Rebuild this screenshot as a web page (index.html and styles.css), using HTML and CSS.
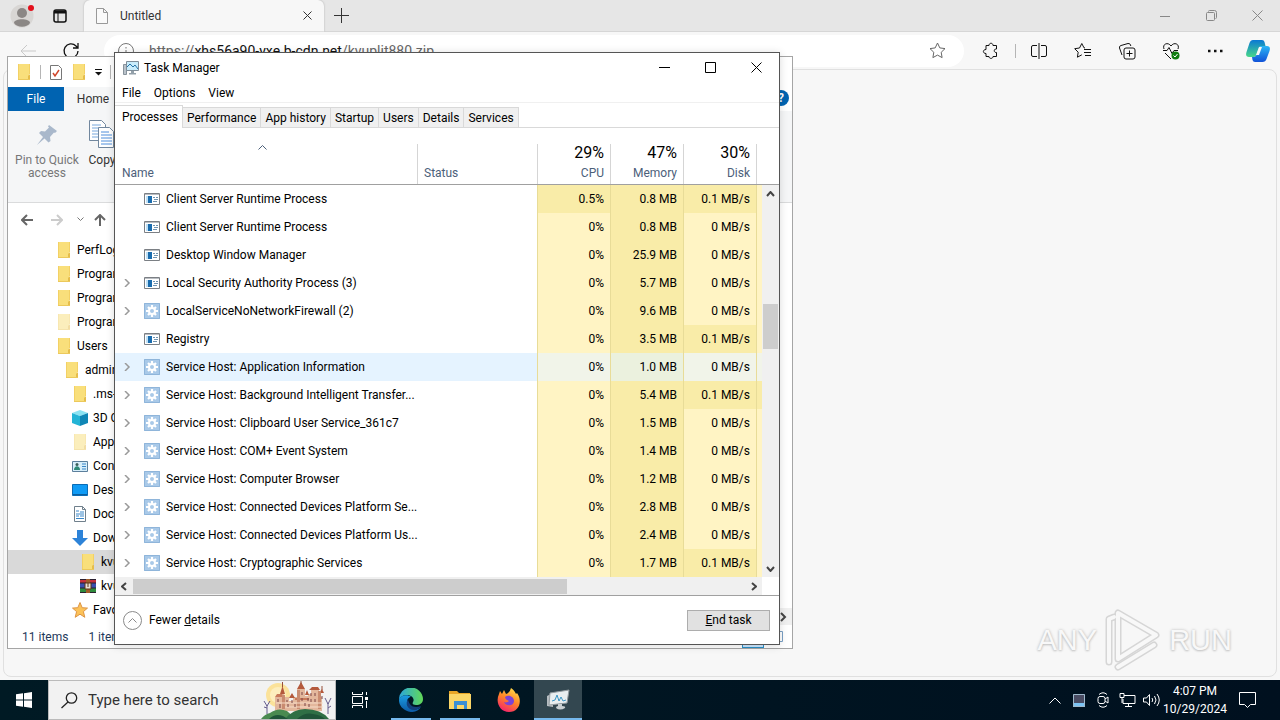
FILE: index.html
```html
<!DOCTYPE html>
<html lang="en">

<head>
    <meta charset="UTF-8">
    <meta name="viewport" content="width=device-width, initial-scale=1.0">
    <title>Desktop</title>
    <link rel="stylesheet" href="styles.css">
</head>

<body>
    <!-- shared icons -->
    <svg class="sprite" aria-hidden="true">
        <symbol id="i-folder" viewBox="0 0 16 16">
            <path d="M2 0h11v11l1 1v4H2z" fill="#f9df7b"/>
            <path d="M2 0h1v16H2zM13 0h1v10h-1z" fill="#f3d165"/>
            <path d="M12 12l2-2v6h-2z" fill="#e6bd4b"/>
            <path d="M2 15h12v1H2z" fill="#ecc95c"/>
        </symbol>
        <symbol id="i-cube" viewBox="0 0 16 16">
            <path d="M8 0l8 3-8 3-8-3z" fill="#8be3f2"/>
            <path d="M0 3l8 3v10l-8-3z" fill="#23b4d6"/>
            <path d="M16 3L8 6v10l8-3z" fill="#0f86b5"/>
        </symbol>
        <symbol id="i-contact" viewBox="0 0 16 16">
            <path d="M.5 3.500h15v10H.5z" fill="#d7eefa" stroke="#5b7f9c"/>
            <circle cx="5" cy="6.500" r="1.500" fill="#3b5f5a"/>
            <path d="M2 12c0-5 6-5 6 0z" fill="#2f8a78"/>
            <path d="M10 6h4M10 8.500h4M10 11h4" stroke="#3a87c8"/>
        </symbol>
        <symbol id="i-desktop" viewBox="0 0 16 16">
            <path d="M.5 2.500h15v11H.5z" fill="#109bf5" stroke="#0b6cb5"/>
            <path d="M1 12h14v1H1z" fill="#0a5f9f"/>
        </symbol>
        <symbol id="i-doc" viewBox="0 0 16 16">
            <path d="M2.500.5h8l3 3v12h-11z" fill="#fff" stroke="#70808c"/>
            <path d="M10.500.5v3h3" fill="none" stroke="#70808c"/>
            <path d="M4 5h3M8 6h4M4 8h8M4 10h3M8 10h4M4 12.500h8" stroke="#3a87c8"/>
        </symbol>
        <symbol id="i-down" viewBox="0 0 16 16">
            <path d="M5 0h6v8h5l-8 8-8-8h5z" fill="#2d83d8"/>
        </symbol>
        <symbol id="i-rar" viewBox="0 0 16 16">
            <path d="M0 1h16v4H0z" fill="#c4303c"/>
            <path d="M0 5h16v5H0z" fill="#3b4fae"/>
            <path d="M0 10h16v5H0z" fill="#2f8a3c"/>
            <path d="M0 5h16M0 10h16M0 1.500h16M0 14.500h16" stroke="#2b2030"/>
            <path d="M6 1h4v14H6z" fill="#a05d28"/>
            <path d="M5 5h6v6H5z" fill="#e9dfd2" stroke="#5b3417"/>
            <path d="M8 5v4" stroke="#5b3417"/>
        </symbol>
        <symbol id="i-star" viewBox="0 0 16 16">
            <path d="M8 .5l2.200 5.200 5.300.4-4.100 3.500 1.400 5.700L8 12.200l-4.800 3.100 1.400-5.700L.5 6.100l5.300-.4z" fill="#fcc258" stroke="#dc9445"/>
        </symbol>
        <symbol id="i-app" viewBox="0 0 16 16">
            <path d="M.5 2.500h15v11H.5z" fill="#fff" stroke="#7b7f84"/>
            <path d="M1 3h14v1H1z" fill="#b9bdc2"/>
            <path d="M2 5h6v7H2z" fill="#bfe0f5"/>
            <path d="M4 5h4v7H4z" fill="#1a6cae"/>
            <path d="M9 6.500h2M12 6.500h2M10 8.500h4M9 10.500h4" stroke="#6f93b0"/>
        </symbol>
        <symbol id="i-gear" viewBox="0 0 16 16">
            <path d="M0 0h16v16H0z" fill="#a9c9e8"/>
            <path d="M.5.5h15v15H.5z" fill="none" stroke="#8fb5da"/>
            <path d="M8 2v12M2 8h12M4 4l8 8M12 4l-8 8" stroke="#fff" stroke-width="2.200"/>
            <circle cx="8" cy="8" r="3" fill="#a9c9e8" stroke="#fff" stroke-width="2"/>
        </symbol>
        <symbol id="i-chevron" viewBox="0 0 8 8">
            <path d="M2 0l4 4-4 4" fill="none" stroke="currentColor" stroke-width="1.500"/>
        </symbol>
        <symbol id="i-monitor" viewBox="0 0 16 16">
            <path d="M.5 4.500h3v10h-3z" fill="#b9c2ca" stroke="#87929b"/>
            <path d="M3.500 1.500h12v9h-12z" fill="#c8ecfb" stroke="#7e8d99"/>
            <path d="M4 7l3-3 3 3 2-2 3 4" fill="none" stroke="#2674a8"/>
            <path d="M8 11h3v2h2v1.500H6V13h2z" fill="#93a0aa"/>
        </symbol>
    </svg>

    <div class="desktop">
        <main class="browser">
            <div class="tabstrip">
                <button class="profile" aria-label="Profile">
                    <svg width="24" height="24" viewBox="0 0 24 24">
                        <circle cx="12" cy="12" r="11.500" fill="#d8d6d4"/>
                        <circle cx="12" cy="9" r="5" fill="#8b8785"/>
                        <path d="M4 19c0-5 16-5 16 0-3 5-13 5-16 0z" fill="#8b8785"/>
                        <circle cx="21" cy="4" r="3" fill="#e3101c"/>
                    </svg>
                </button>
                <button class="workspaces" aria-label="Tab actions">
                    <svg width="14" height="14" viewBox="0 0 14 14" fill="none" stroke="#111">
                        <rect x="1" y="1" width="12" height="12" rx="2" stroke-width="1.500"/>
                        <path d="M1 3h12" stroke-width="3"/>
                        <path d="M5 4v9"/>
                    </svg>
                </button>
                <div class="tab">
                    <svg width="12" height="16" viewBox="0 0 12 16" fill="#fafafa" stroke="#999">
                        <path d="M.5.5h7l4 4v11H.5zM7.500.5v4h4"/>
                    </svg>
                    <span class="tab-title">Untitled</span>
                    <button aria-label="Close tab">
                        <svg width="9" height="9" viewBox="0 0 9 9" stroke="#333"><path d="M.5.5l8 8M8.500.5l-8 8"/></svg>
                    </button>
                </div>
                <button class="new-tab" aria-label="New tab">
                    <svg width="15" height="15" viewBox="0 0 15 15" stroke="#333"><path d="M7.500 0v15M0 7.500h15"/></svg>
                </button>
                <div class="browser-controls">
                    <button aria-label="Minimize"><svg width="10" height="10" viewBox="0 0 10 10"><path d="M0 5.500h10"/></svg></button>
                    <button aria-label="Restore"><svg width="11" height="11" viewBox="0 0 11 11"><rect x=".5" y="2.500" width="8" height="8" rx="1"/><path d="M2.500 1.500q0-1 1-1h5q2 0 2 2v5q0 1-1 1"/></svg></button>
                    <button aria-label="Close"><svg width="11" height="11" viewBox="0 0 11 11"><path d="M.5.5l10 10M10.500.5l-10 10"/></svg></button>
                </div>
            </div>

            <div class="toolbar">
                <button class="back" aria-label="Back">
                    <svg width="16" height="14" viewBox="0 0 16 14" fill="none" stroke="#c9c9c9"><path d="M16 7H1M7 1L1 7l6 6"/></svg>
                </button>
                <button aria-label="Refresh">
                    <svg width="18" height="18" viewBox="0 0 18 18" fill="none" stroke="#111" stroke-width="1.300"><path d="M16 9a7 7 0 1 1-2-5l2 2M16 1v5h-5"/></svg>
                </button>
                <div class="address">
                    <svg width="16" height="16" viewBox="0 0 16 16" fill="none" stroke="#777"><circle cx="8" cy="8" r="7.500"/><path d="M8 7v5M8 4v1.500"/></svg>
                    <span class="url">https://<b>xhs56a90-yxe.b-cdn.net</b>/kvuplit880.zip</span>
                    <button aria-label="Add to favorites">
                        <svg width="17" height="17" viewBox="0 0 17 17" fill="none" stroke="#666"><path d="M8.500 1l2.300 4.900 5.200.7-3.800 3.700.9 5.300-4.600-2.500-4.600 2.500.9-5.300L1 6.600l5.200-.7z"/></svg>
                    </button>
                </div>
                <div class="tools">
                    <button aria-label="Extensions">
                        <svg viewBox="0 0 18 18"><path d="M4 3.500h3c0-3 4-3 4 0h3.500V7c-3-.5-3 4 0 3.500v4H11c0 2.500-4 2.500-4 0H4v-3c-3.500 0-3.500-4 0-4z"/></svg>
                    </button>
                    <span class="divider"></span>
                    <button aria-label="Split screen">
                        <svg viewBox="0 0 18 18"><path d="M7 3.500H3q-1.500 0-1.500 1.500v8q0 1.500 1.500 1.500h4M11 3.500h4q1.500 0 1.500 1.500v8q0 1.500-1.500 1.500h-4M9 1v16"/></svg>
                    </button>
                    <button aria-label="Favorites">
                        <svg viewBox="0 0 18 18"><path d="M11 6l-1-.2L7.800 1.500 5.500 6l-4.800.7 3.500 3.500-.8 5 4.400-2.400M10 7.500h7M10 10.500h7M11 13.500h6"/></svg>
                    </button>
                    <button aria-label="Collections">
                        <svg viewBox="0 0 18 18"><rect x="6" y="6" width="11" height="11" rx="2"/><path d="M11.500 8.500v6M8.500 11.500h6M4 13L1.500 6q-.5-2 1.500-2.500l7-2q2-.3 2.500 1.500l.3 1"/></svg>
                    </button>
                    <button aria-label="Browser essentials">
                        <svg viewBox="0 0 18 18"><path d="M2 7C0 2 6-.5 9 4c3-4.500 9-2 7 3M1 8.500h4l2-3 3 6 2-3h4M3 11l6 6"/><circle cx="13.500" cy="13.500" r="4" fill="#107c10" stroke="none"/><path d="M11.500 13.500l1.500 1.500 2.500-3" stroke="#fff"/></svg>
                    </button>
                    <button aria-label="Settings and more">
                        <svg viewBox="0 0 18 18"><path d="M2 9h2.500M8 9h2.500M14 9h2.500" stroke-width="2.500"/></svg>
                    </button>
                    <button class="copilot" aria-label="Copilot">
                        <svg viewBox="0 0 24 24">
                            <defs>
                                <linearGradient id="cp1" x1="0" y1="0" x2="0" y2="1"><stop offset="0" stop-color="#0a78d4"/><stop offset="1" stop-color="#48d88a"/></linearGradient>
                                <linearGradient id="cp2" x1="0" y1="0" x2="0" y2="1"><stop offset="0" stop-color="#2bb6f5"/><stop offset="1" stop-color="#1152d8"/></linearGradient>
                            </defs>
                            <path d="M7 1h9q2 0 2.500 2l1 4h-4q-2 0-3 3l-2 6q-.8 2-3 2H3q-4 0-2.500-5L3.500 4Q4.500 1 7 1z" fill="url(#cp1)" stroke="none"/>
                            <path d="M15 7h6q4 0 2.500 5l-3 8q-1 3-4 3H9q-2 0-2.500-2L6 18h2q2 0 3-3l2-6q.5-2 2-2z" fill="url(#cp2)" stroke="none"/>
                            <path d="M13 8h3l-3 8h-3z" fill="#f7f7f7" stroke="none"/>
                        </svg>
                    </button>
                </div>
            </div>

            <div class="page">
                <div class="watermark">
                    <span>ANY</span>
                    <svg width="56" height="62" viewBox="0 0 56 62" fill="none" stroke-linejoin="round" stroke-linecap="round">
                        <g stroke="#d6d6d6" stroke-width="7"><path d="M4 53V10l5-2M13 4v46l38-24z"/><path d="M13 58l36-22"/></g>
                        <g stroke="#f8f8f8" stroke-width="4"><path d="M4 53V10l5-2M13 4v46l38-24z"/><path d="M13 58l36-22"/></g>
                    </svg>
                    <span>RUN</span>
                </div>
            </div>
        </main>

        <section class="window explorer" aria-label="File Explorer">
            <div class="quickbar">
                <svg class="icon"><use href="#i-folder"/></svg>
                <span class="divider"></span>
                <svg width="14" height="15" viewBox="0 0 14 15"><path d="M1.500.5h8l3 3v11h-11z" fill="#fff" stroke="#777"/><path d="M4 8l2 3 4-6" fill="none" stroke="#d0472c" stroke-width="1.500"/></svg>
                <svg class="icon"><use href="#i-folder"/></svg>
                <svg width="7" height="7" viewBox="0 0 7 7"><path d="M0 .5h7" stroke="#111"/><path d="M0 3h7L3.500 6.500z" fill="#111"/></svg>
                <span class="divider"></span>
            </div>
            <div class="ribbon-tabs">
                <button class="file-tab">File</button>
                <button class="home-tab">Home</button>
                <button class="help" aria-label="Help">?</button>
            </div>
            <div class="ribbon">
                <button class="pin">
                    <svg width="22" height="22" viewBox="0 0 22 22" fill="#a9b8cb"><path d="M13 1l8 6-2 2-1-.5-4 4.500.5 4-2 1.500-4-4L1 21l6-8-4-4 2-2 4 .5 4-4-1-1z"/></svg>
                    Pin to Quick access
                </button>
                <button class="copy">
                    <svg width="26" height="30" viewBox="0 0 26 30" fill="#fff" stroke="#71879e">
                        <path d="M.5 1.500h12l4 4v16H.5z"/>
                        <path d="M3 6h9M3 9h11M3 12h11M3 15h11M3 18h11" stroke="#76a7dd"/>
                        <path d="M9.500 8.500h11l4 4v16h-15z"/>
                        <path d="M12 13h8M12 16h11M12 19h11M12 22h11M12 25h11" stroke="#4e8edb"/>
                    </svg>
                    Copy
                </button>
            </div>
            <div class="nav">
                <button aria-label="Back"><svg width="12" height="12" viewBox="0 0 12 12" stroke="#666"><path d="M12 6H1M6 1L1 6l5 5"/></svg></button>
                <button aria-label="Forward"><svg width="12" height="12" viewBox="0 0 12 12" stroke="#ccc"><path d="M0 6h11M6 1l5 5-5 5"/></svg></button>
                <button aria-label="Recent"><svg width="7" height="5" viewBox="0 0 7 5" stroke="#777"><path d="M.5.5l3 3 3-3"/></svg></button>
                <button aria-label="Up"><svg width="12" height="12" viewBox="0 0 12 12" stroke="#666"><path d="M6 12V1M1 6l5-5 5 5"/></svg></button>
            </div>
            <ul class="tree">
                <li><svg class="icon"><use href="#i-folder"/></svg>PerfLogs</li>
                <li><svg class="icon"><use href="#i-folder"/></svg>Program Files</li>
                <li><svg class="icon"><use href="#i-folder"/></svg>Program Files (x86)</li>
                <li class="hidden-item"><svg class="icon"><use href="#i-folder"/></svg>ProgramData</li>
                <li><svg class="icon"><use href="#i-folder"/></svg>Users</li>
                <li class="level-2"><svg class="icon"><use href="#i-folder"/></svg>admin</li>
                <li class="level-3"><svg class="icon"><use href="#i-folder"/></svg>.ms-ad</li>
                <li class="level-3"><svg class="icon"><use href="#i-cube"/></svg>3D Objects</li>
                <li class="level-3 hidden-item"><svg class="icon"><use href="#i-folder"/></svg>AppData</li>
                <li class="level-3"><svg class="icon"><use href="#i-contact"/></svg>Contacts</li>
                <li class="level-3"><svg class="icon"><use href="#i-desktop"/></svg>Desktop</li>
                <li class="level-3"><svg class="icon"><use href="#i-doc"/></svg>Documents</li>
                <li class="level-3"><svg class="icon"><use href="#i-down"/></svg>Downloads</li>
                <li class="level-4 selected"><svg class="icon"><use href="#i-folder"/></svg>kvuplit880</li>
                <li class="level-4"><svg class="icon"><use href="#i-rar"/></svg>kvuplit880.zip</li>
                <li class="level-3"><svg class="icon"><use href="#i-star"/></svg>Favorites</li>
            </ul>
            <div class="explorer-status">
                <span>11 items</span>
                <span>1 item selected</span>
                <div class="views">
                    <svg class="scroll-end" width="17" height="17" viewBox="0 0 17 17"><path d="M0 0h17v17H0z" fill="#f0f0f0"/><path d="M6 5l4 4-4 4" fill="none" stroke="#444" stroke-width="2"/></svg>
                    <span class="view-active"></span>
                    <svg width="18" height="14" viewBox="0 0 18 14" fill="#fff" stroke="#7aa0c4"><path d="M.5 2.500h16v10H.5zM10 5h4M10 8h4"/></svg>
                </div>
            </div>
        </section>

        <section class="window taskmgr" aria-label="Task Manager">
            <div class="titlebar">
                <svg class="icon"><use href="#i-monitor"/></svg>
                <span>Task Manager</span>
                <div class="controls">
                    <button aria-label="Minimize"><svg width="11" height="11" viewBox="0 0 11 11"><path d="M0 5.500h11"/></svg></button>
                    <button aria-label="Maximize"><svg width="11" height="11" viewBox="0 0 11 11"><path d="M.5.5h10v10H.5z"/></svg></button>
                    <button aria-label="Close"><svg width="11" height="11" viewBox="0 0 11 11"><path d="M.5.5l10 10M10.500.5l-10 10"/></svg></button>
                </div>
            </div>
            <div class="menubar">
                <button>File</button>
                <button>Options</button>
                <button>View</button>
            </div>
            <div class="tabs">
                <button class="active">Processes</button>
                <button>Performance</button>
                <button>App history</button>
                <button>Startup</button>
                <button>Users</button>
                <button>Details</button>
                <button>Services</button>
            </div>
            <div class="list">
                <table>
                    <thead>
                        <tr>
                            <th class="col-name"><svg width="9" height="5" viewBox="0 0 9 5"><path d="M.5 4.500l4-4 4 4"/></svg>Name</th>
                            <th class="col-status">Status</th>
                            <th class="col-num"><span>29%</span>CPU</th>
                            <th class="col-num"><span>47%</span>Memory</th>
                            <th class="col-num"><span>30%</span>Disk</th>
                            <th class="col-more"></th>
                        </tr>
                    </thead>
                    <tbody id="processes"></tbody>
                </table>
                <div class="vscroll">
                    <div class="vscroll-head"></div>
                    <button aria-label="Scroll up"><svg width="9" height="6" viewBox="0 0 9 6"><path d="M1 5l3.500-4L8 5"/></svg></button>
                    <div class="vtrack"><div class="vthumb"></div></div>
                    <button aria-label="Scroll down"><svg width="9" height="6" viewBox="0 0 9 6"><path d="M1 1l3.500 4L8 1"/></svg></button>
                </div>
            </div>
            <div class="hscroll">
                <button aria-label="Scroll left"><svg width="6" height="9" viewBox="0 0 6 9"><path d="M5 1L1 4.500 5 8"/></svg></button>
                <div class="htrack"><div class="hthumb"></div></div>
                <button aria-label="Scroll right"><svg width="6" height="9" viewBox="0 0 6 9"><path d="M1 1l4 3.500L1 8"/></svg></button>
            </div>
            <div class="footer">
                <button class="fewer">
                    <svg width="19" height="19" viewBox="0 0 19 19" fill="none" stroke="#8a8a8a"><circle cx="9.500" cy="9.500" r="9"/><path d="M5.500 11.500l4-4 4 4"/></svg>
                    <span>Fewer <u>d</u>etails</span>
                </button>
                <button class="end-task"><span><u>E</u>nd task</span></button>
            </div>
        </section>

        <footer class="taskbar">
            <button class="start" aria-label="Start">
                <svg width="16" height="16" viewBox="0 0 16 16" fill="#fff"><path d="M0 2.300L7 1.300v6.200H0zM8 1.200L16 0v7.500H8zM0 8.500h7v6.200l-7-1zM8 8.500h8V16l-8-1.200z"/></svg>
            </button>
            <label class="search">
                <svg width="17" height="17" viewBox="0 0 17 17" fill="none" stroke="#222" stroke-width="1.300"><circle cx="10.500" cy="6" r="5.200"/><path d="M7 10l-6.500 6"/></svg>
                <input type="text" placeholder="Type here to search" aria-label="Search">
                <svg class="castle" width="72" height="38" viewBox="0 0 72 38">
                    <circle cx="17" cy="14" r="12" fill="#fbe29a"/>
                    <circle cx="17" cy="14" r="8" fill="#fdeebd"/>
                    <path d="M14 16h5v-3h4v3h5v4h4v-4h4v-8h8v7h3v-2h3v-4h8v7h3v14H14z" fill="#e3b79c"/>
                    <path d="M19 13l2.500-8 2.500 8zM36 8l4-7 4 7zM48 9h11l-2-3h-6zM28 17l3-5 3 5zM44 14l2-5 2 5zM58 12l3-4 2 4z" fill="#b4593c"/>
                    <path d="M14 16h9l-2-3h-5zM34 19h14v-2H34z" fill="#c9795a"/>
                    <path d="M21 14h3v14h-3zM36 9h3v19h-3zM57 10h3v18h-3z" fill="#c98b70"/>
                    <path d="M15 22h47M24 26h38" stroke="#f6dcc8"/>
                    <path d="M17 18v3M19 23v4M26 19v2M27 23v3M31 19v3M34 23v3M41 11v3M41 17v3M44 22v3M47 17v3M50 12v3M54 12v3M50 18v3M54 18v3M61 15v3M48 23v3" stroke="#7a4547"/>
                    <path d="M21.500 1v5M40 0v3M61 5v4" stroke="#96503b"/>
                    <path d="M0 38q4-5 9-6 8-6 17-2l9 8z" fill="#4a8a50"/>
                    <path d="M24 38q8-10 20-10 16 0 24 10z" fill="#2f6f45"/>
                    <path d="M8 38q6-6 14-3l5 3zM36 38q8-7 16-5 8 1 12 5z" fill="#1f5438"/>
                    <path d="M6 33V24M3 20l3 5 3-5M6 27l-3-1M67 33V22M64 17l3 6 3-6M67 27l3-2" fill="none" stroke="#665d8d"/>
                </svg>
            </label>
            <div class="apps">
                <button class="task-view" aria-label="Task View">
                    <svg width="18" height="16" viewBox="0 0 18 16" fill="none" stroke="#fff"><path d="M1.500 0v2.500h10V0M1.500 16v-2.500h10V16M1.500 4.500h10v7h-10zM15.500 0v3M15.500 9v7"/><path d="M14 5h3v3h-3z" fill="#fff" stroke="none"/></svg>
                </button>
                <button class="running" aria-label="Microsoft Edge">
                    <svg width="24" height="24" viewBox="0 0 24 24">
                        <defs>
                            <linearGradient id="e1" x1="0" y1="0" x2="1" y2="0"><stop offset="0" stop-color="#2aa6dc"/><stop offset="1" stop-color="#62d957"/></linearGradient>
                            <linearGradient id="e2" x1="0" y1="0" x2="0" y2="1"><stop offset="0" stop-color="#1b9de2"/><stop offset="1" stop-color="#0c59a4"/></linearGradient>
                        </defs>
                        <path d="M0 12A12 12 0 0 1 24 11c0 4-3 6-7 6-3 0-4-1-3-3 2-3-1-7-6-7-4 0-7 2-8 5z" fill="url(#e1)"/>
                        <path d="M0 12C1 7 9 6 12 9c-4 0-6 7-1 11 3 2 8 2 11-1-3 5-10 6.500-15 3.500C2 20 0 16 0 12z" fill="url(#e2)"/>
                        <path d="M9 11c-3 4-1 11 6 11 3 0 6-2 7-4-8 3-12-1-13-7z" fill="#123f7c"/>
                    </svg>
                </button>
                <button class="running" aria-label="File Explorer">
                    <svg width="22" height="20" viewBox="0 0 22 20">
                        <path d="M0 1h8l2 2h11v5H0z" fill="#e9a626"/>
                        <path d="M0 4h22v15H0z" fill="#fbd667"/>
                        <path d="M5 19v-8h13v8h-3v-4h-7v4z" fill="#3b8fd4"/>
                    </svg>
                </button>
                <button aria-label="Firefox">
                    <svg width="24" height="24" viewBox="0 0 24 24">
                        <defs><linearGradient id="fx" x1=".8" y1="0" x2=".3" y2="1"><stop offset="0" stop-color="#ffe14a"/><stop offset=".5" stop-color="#ff8427"/><stop offset="1" stop-color="#f5216d"/></linearGradient></defs>
                        <path d="M14 0c3 2 4 4 5 6l1-1c6 8 2 19-8 19C3 24-2 14 2 6l1-3 2 3 2-4 2 4c3-1 4-3 5-6z" fill="url(#fx)"/>
                        <path d="M8 9c4-3 9 0 9 4 0 5-8 6-10 1 2 1 4 0 5-1-2-1-4-2-4-4z" fill="#7b43d6"/>
                    </svg>
                </button>
                <button class="running current" aria-label="Task Manager">
                    <svg width="24" height="22" viewBox="0 0 24 22">
                        <path d="M1 7l6-3v14l-6-1z" fill="#b6bcc0"/>
                        <path d="M4 4l19-3-2 13-18 2z" fill="#e9eef0" stroke="#929a9f"/>
                        <path d="M6 12l3-1 2-5 2 6 2-4 2 4 3-1" fill="none" stroke="#3c95c4"/>
                        <path d="M12 15h4v2q4 0 3 2-5 3-9 0 0-2 2-2z" fill="#c9cfd2"/>
                    </svg>
                </button>
            </div>
            <div class="tray">
                <button aria-label="Show hidden icons"><svg width="12" height="7" viewBox="0 0 12 7"><path d="M.5 6.500L6 1l5.500 5.500"/></svg></button>
                <button aria-label="Tray app"><svg width="12" height="13" viewBox="0 0 12 13"><path d="M0 0h12v13H0z" fill="#4a4c63" stroke="none"/><path d="M0 9h12v4H0z" fill="#7cc4f4" stroke="none"/><path d="M.5.5h11v12H.5z" stroke="#9fb9cc"/></svg></button>
                <button aria-label="Meet now"><svg width="12" height="16" viewBox="0 0 12 16"><rect x="1" y="4.500" width="7" height="7" rx="2"/><path d="M8 7l3-2v6L8 9M2 2.500Q6-1 10 2.500M2 13.500q4 3.500 8 0"/></svg></button>
                <button aria-label="Network"><svg width="17" height="15" viewBox="0 0 17 15"><path d="M5 2.500h11v8H4V6M9.500 11v3M6 13.500h7M1 .5h4v4H1zM3 5v5"/></svg></button>
                <button aria-label="Volume"><svg width="17" height="14" viewBox="0 0 17 14"><path d="M.5 5h3l3-3.500v11L3.500 9h-3zM9 5q1.500 2 0 4M11.500 3q3 4 0 8M14 1q4.500 6 0 12"/></svg></button>
                <div class="clock"><span>4:07 PM</span><span>10/29/2024</span></div>
                <button class="notify" aria-label="Notifications"><svg width="17" height="16" viewBox="0 0 17 16"><path d="M.5.5h16v12h-5l-3 3-3-3h-5z"/></svg></button>
            </div>
        </footer>
    </div>

    <script>
        // name, icon, expandable, cpu, memory, disk
        const processes = [
            ['Client Server Runtime Process', 'app', false, '0.5%', '0.8 MB', '0.1 MB/s'],
            ['Client Server Runtime Process', 'app', false, '0%', '0.8 MB', '0 MB/s'],
            ['Desktop Window Manager', 'app', false, '0%', '25.9 MB', '0 MB/s'],
            ['Local Security Authority Process (3)', 'app', true, '0%', '5.7 MB', '0 MB/s'],
            ['LocalServiceNoNetworkFirewall (2)', 'gear', true, '0%', '9.6 MB', '0 MB/s'],
            ['Registry', 'app', false, '0%', '3.5 MB', '0.1 MB/s'],
            ['Service Host: Application Information', 'gear', true, '0%', '1.0 MB', '0 MB/s'],
            ['Service Host: Background Intelligent Transfer...', 'gear', true, '0%', '5.4 MB', '0.1 MB/s'],
            ['Service Host: Clipboard User Service_361c7', 'gear', true, '0%', '1.5 MB', '0 MB/s'],
            ['Service Host: COM+ Event System', 'gear', true, '0%', '1.4 MB', '0 MB/s'],
            ['Service Host: Computer Browser', 'gear', true, '0%', '1.2 MB', '0 MB/s'],
            ['Service Host: Connected Devices Platform Se...', 'gear', true, '0%', '2.8 MB', '0 MB/s'],
            ['Service Host: Connected Devices Platform Us...', 'gear', true, '0%', '2.4 MB', '0 MB/s'],
            ['Service Host: Cryptographic Services', 'gear', true, '0%', '1.7 MB', '0.1 MB/s']
        ];
        const hovered = 6;
        const busyNetwork = 7;

        function heat(value) {
            return parseFloat(value) > 0 ? 'num warm' : 'num';
        }

        document.getElementById('processes').innerHTML = processes.map(([name, icon, expandable, cpu, memory, disk], i) => `
            <tr class="${i === hovered ? 'hover' : ''}">
                <td class="name"><div>
                    <svg class="arrow">${expandable ? '<use href="#i-chevron"/>' : ''}</svg>
                    <svg class="icon"><use href="#i-${icon}"/></svg>
                    <span>${name}</span>
                </div></td>
                <td></td>
                <td class="${heat(cpu)}">${cpu}</td>
                <td class="${heat(memory)}">${memory}</td>
                <td class="${heat(disk)}">${disk}</td>
                <td class="num ${i === busyNetwork ? 'warm' : ''}"></td>
            </tr>
        `).join('');
    </script>
</body>

</html>
```
FILE: styles.css
```css
* {
    box-sizing: border-box;
}

body {
    margin: 0;
    font-family: Roboto, 'Open Sans', sans-serif;
    font-size: 12px;
    line-height: 16px;
    color: #000;
}

button {
    display: flex;
    align-items: center;
    justify-content: center;
    flex: none;
    margin: 0;
    padding: 0;
    border: 0;
    background: none;
    font: inherit;
    color: inherit;
}

svg {
    display: block;
    flex: none;
}

.sprite {
    display: none;
}

.icon {
    width: 16px;
    height: 16px;
}

.divider {
    width: 1px;
    height: 14px;
    background: #b5b5b5;
}

.desktop {
    position: relative;
    display: flex;
    flex-direction: column;
    min-height: 100vh;
    overflow: hidden;
}

/* browser */
.browser {
    flex: 1;
    display: flex;
    flex-direction: column;
    background: #f7f7f7;
}

.tabstrip {
    display: flex;
    align-items: center;
    height: 32px;
    background: #e6e6e6;
    border-bottom: 1px solid #d6d6d6;
}

.profile {
    width: 24px;
    margin-left: 10px;
}

.workspaces {
    width: 16px;
    margin: 0 16px 0 18px;
}

.tab {
    display: flex;
    align-items: center;
    width: 240px;
    height: 32px;
    padding: 0 12px;
    gap: 12px;
    background: #f7f7f7;
    border-radius: 6px 6px 0 0;
    box-shadow: 0 0 2px #aaa;
    color: #333;
    clip-path: inset(-2px -2px 0);
}

.tab-title {
    flex: 1;
}

.new-tab {
    width: 34px;
    height: 32px;
}

.browser-controls {
    display: flex;
    margin-left: auto;
    fill: none;
    stroke: #888;
}

.browser-controls button {
    width: 46px;
    height: 32px;
}

.toolbar {
    display: flex;
    align-items: center;
    height: 37px;
    padding: 0 10px 0 20px;
}

.back {
    margin-right: 26px;
}

.address {
    flex: 1;
    display: flex;
    align-items: center;
    height: 32px;
    margin-left: 24px;
    padding: 0 18px 0 14px;
    gap: 15px;
    background: #fff;
    border-radius: 16px;
    font-size: 14px;
    color: #666;
}

.address b {
    font-weight: normal;
    color: #111;
}

.url {
    flex: 1;
}

.tools {
    display: flex;
    align-items: center;
    margin-left: 18px;
    gap: 26px;
}

.tools svg {
    width: 18px;
    height: 18px;
    fill: none;
    stroke: #111;
}

.tools .divider {
    margin: 0 -12px 0 -11px;
}

.tools .copilot {
    margin-left: -4px;
}

.tools .copilot svg {
    width: 24px;
    height: 24px;
}

.page {
    flex: 1;
    display: flex;
    align-items: flex-end;
    justify-content: flex-end;
    margin: 0 3px 3px;
    padding: 0 44px 5px;
    border: 1px solid #e0e0e0;
    border-radius: 8px;
    background: #f7f7f7;
}

.watermark {
    display: flex;
    align-items: center;
    gap: 8px;
    font-family: 'Liberation Sans Narrow', 'Liberation Sans', sans-serif;
    font-size: 29px;
    line-height: 40px;
    color: #f8f8f8;
    text-shadow: 0 0 3px #bbb, 0 1px 2px #ccc;
}

/* windows */
.window {
    position: absolute;
    background: #fff;
    border: 1px solid #a5a5a5;
}

.explorer {
    left: 7px;
    top: 56px;
    width: 786px;
}

.quickbar {
    display: flex;
    align-items: center;
    height: 30px;
    padding-left: 8px;
    gap: 8px;
}

.ribbon-tabs {
    display: flex;
    height: 24px;
}

.file-tab {
    width: 56px;
    background: #0063b1;
    color: #fff;
}

.home-tab {
    width: 58px;
    background: #f5f6f7;
    color: #333;
}

.help {
    width: 16px;
    height: 16px;
    margin: 3px 3px 0 auto;
    border-radius: 8px;
    background: #0063b1;
    color: #fff;
    font-weight: bold;
}

.ribbon {
    display: flex;
    align-items: flex-start;
    height: 92px;
    padding-top: 8px;
    background: #f5f6f7;
    border-bottom: 1px solid #dadbdc;
    line-height: 13px;
}

.ribbon button {
    flex-direction: column;
}

.pin {
    width: 78px;
    padding: 5px 5px 0;
    gap: 8px;
    color: #777;
}

.copy {
    width: 32px;
    gap: 5px;
    color: #333;
}

.nav {
    display: flex;
    align-items: center;
    height: 33px;
    padding-left: 13px;
    fill: none;
    stroke-width: 2;
}

.nav button {
    margin-right: 18px;
}

.nav button:nth-child(2) {
    margin-right: 14px;
}

.nav button:nth-child(3) {
    margin-right: 10px;
}

.nav button:nth-child(3) svg {
    stroke-width: 1;
}

.tree {
    width: 300px;
    margin: 2px 0 0;
    padding: 0;
    list-style: none;
}

.tree li {
    display: flex;
    align-items: center;
    height: 24px;
    padding-left: 48px;
    gap: 5px;
    white-space: nowrap;
}

.tree .level-2 {
    padding-left: 56px;
}

.tree .level-3 {
    padding-left: 64px;
}

.tree .level-4 {
    padding-left: 72px;
}

.tree .selected {
    background: #d9d9d9;
}

.hidden-item .icon {
    opacity: 0.5;
}

.explorer-status {
    display: flex;
    align-items: center;
    height: 26px;
    padding: 4px 0 0 14px;
    gap: 20px;
    color: #1e395b;
}

.views {
    position: relative;
    display: flex;
    align-items: flex-end;
    height: 22px;
    margin-left: auto;
    padding: 0 8px 5px 0;
    gap: 2px;
}

.view-active {
    width: 22px;
    height: 22px;
    margin-bottom: -5px;
    background: #cce8ff;
    border: 1px solid #2b90c8;
}

.scroll-end {
    position: absolute;
    right: 0;
    top: -18px;
}

/* task manager */
.taskmgr {
    left: 114px;
    top: 52px;
    width: 666px;
    border-color: #555;
    box-shadow: 0 1px 8px rgba(0, 0, 0, 0.15);
}

.titlebar {
    display: flex;
    align-items: center;
    height: 30px;
    padding-left: 8px;
    gap: 5px;
}

.controls {
    display: flex;
    align-self: flex-start;
    margin-left: auto;
    fill: none;
    stroke: #000;
}

.controls button {
    width: 46px;
    height: 29px;
}

.menubar {
    display: flex;
    height: 20px;
    padding-left: 7px;
    gap: 13px;
    border-bottom: 1px solid #f0f0f0;
}

.tabs {
    display: flex;
    align-items: flex-end;
    height: 25px;
    border-bottom: 1px solid #d9d9d9;
}

.tabs button {
    height: 20px;
    padding: 0 4px;
    background: #f0f0f0;
    border: 1px solid #d9d9d9;
    border-width: 1px 1px 0 0;
}

.tabs .active {
    height: 23px;
    margin-bottom: -1px;
    padding-left: 7px;
    background: #fff;
}

.list {
    display: flex;
}

table {
    flex: 1;
    width: 100%;
    table-layout: fixed;
    border-collapse: separate;
    border-spacing: 0;
}

th {
    height: 57px;
    padding: 0 6px 3px;
    border-bottom: 1px solid #a0a0a0;
    background: linear-gradient(#d5d5d5, #d5d5d5) left bottom / 1px 40px no-repeat;
    font-weight: normal;
    text-align: left;
    vertical-align: bottom;
    color: #4c607a;
}

th span {
    display: block;
    margin-bottom: 2px;
    font-size: 16px;
    line-height: 20px;
    color: #000;
}

.col-name {
    width: 302px;
    padding-left: 7px;
    background: none;
}

.col-name svg {
    margin: 0 0 15px 136px;
    fill: none;
    stroke: #4c607a;
}

.col-status {
    width: 120px;
    padding-left: 7px;
}

.col-num {
    width: 73px;
    text-align: right;
}

.col-more {
    width: 6px;
    padding: 0;
}

td {
    height: 28px;
    padding: 0;
}

.name div {
    display: flex;
    align-items: center;
    padding-left: 8px;
    gap: 6px;
    white-space: nowrap;
}

.arrow {
    width: 8px;
    height: 8px;
    margin-right: 7px;
    color: #999;
}

.num {
    padding-right: 6px;
    border-left: 1px solid #e8dc98;
    background: #fff4c4;
    text-align: right;
    white-space: nowrap;
}

.num:last-child {
    padding: 0;
}

.warm {
    background: #f9eca8;
}

.hover td {
    background: #e5f3ff;
}

.hover .num {
    background: #f1f4e9;
}

.hover .warm {
    background: #ebf1de;
}

.vscroll {
    display: flex;
    flex: none;
    flex-direction: column;
    width: 17px;
    background: #f0f0f0;
}

.vscroll button,
.hscroll button {
    width: 17px;
    height: 17px;
    fill: none;
    stroke: #444;
    stroke-width: 2;
}

.vscroll-head {
    height: 57px;
    background: #fff;
    border-bottom: 1px solid #a0a0a0;
}

.vtrack {
    flex: 1;
    padding: 102px 1px 0;
}

.vthumb {
    height: 45px;
    background: #cdcdcd;
}

.hscroll {
    display: flex;
    align-items: center;
    height: 18px;
    margin-right: 17px;
    background: #f0f0f0;
}

.htrack {
    flex: 1;
    padding: 0 1px;
}

.hthumb {
    width: 71%;
    height: 15px;
    background: #cdcdcd;
}

.footer {
    display: flex;
    align-items: center;
    justify-content: space-between;
    height: 49px;
    padding: 0 9px 0 8px;
    border-top: 1px solid #a0a0a0;
}

.fewer {
    gap: 7px;
}

.end-task {
    width: 83px;
    height: 21px;
    background: #e1e1e1;
    border: 1px solid #adadad;
}

/* taskbar */
.taskbar {
    display: flex;
    height: 40px;
    background: linear-gradient(90deg, #001a24, #00101f);
    color: #fff;
}

.start {
    width: 48px;
}

.search {
    display: flex;
    align-items: center;
    width: 288px;
    padding-left: 12px;
    gap: 10px;
    background: #f2f2f2;
    border: 1px solid #bbb;
}

.search input {
    flex: 1;
    min-width: 0;
    padding: 0;
    border: 0;
    outline: 0;
    background: none;
    font: inherit;
    font-size: 15px;
}

.search input::placeholder {
    color: #333;
    opacity: 1;
}

.castle {
    margin-right: 2px;
}

.apps {
    display: flex;
    gap: 1px;
}

.apps button {
    width: 48px;
}

.apps .task-view {
    margin-right: 2px;
}

.running {
    background: linear-gradient(#76b9ed, #76b9ed) center bottom / 40px 2px no-repeat;
}

.current {
    background-color: #334750;
    background-size: 48px 2px;
}

.tray {
    display: flex;
    align-items: center;
    margin-left: auto;
    padding-right: 21px;
    fill: none;
    stroke: #fff;
}

.tray button {
    width: 24px;
}

.clock {
    display: flex;
    flex-direction: column;
    align-items: center;
    width: 64px;
    line-height: 18px;
}

.tray .notify {
    margin-left: 8px;
}
```
